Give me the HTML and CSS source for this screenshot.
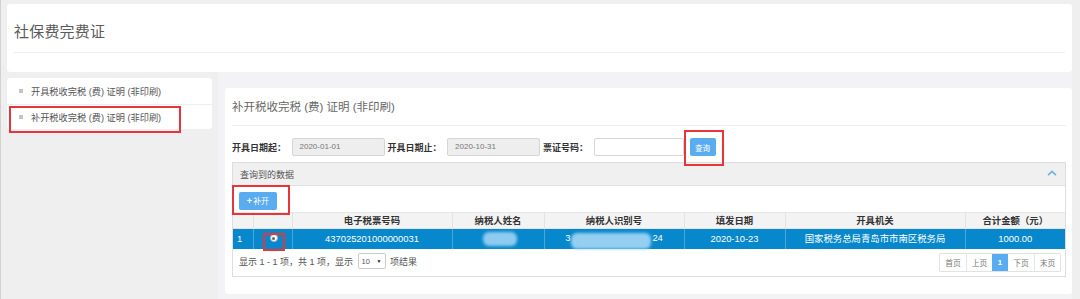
FILE: index.html
```html
<!DOCTYPE html>
<html lang="zh-CN">
<head>
<meta charset="utf-8">
<title>社保费完费证</title>
<link rel="stylesheet" href="styles.css">
</head>
<body>
<div class="page">
  <div class="top-panel">
    <div class="top-title">社保费完费证</div>
  </div>
  <div class="body-row">
    <div class="left-col">
      <ul class="menu">
        <li class="menu-item"><span class="bullet"></span>开具税收完税 (费) 证明 (非印刷)</li>
        <li class="menu-item"><span class="bullet"></span>补开税收完税 (费) 证明 (非印刷)<span class="mark mark-menu"></span></li>
      </ul>
    </div>
    <div class="right-col">
      <div class="main-panel">
        <div class="panel-title">补开税收完税 (费) 证明 (非印刷)</div>
        <div class="form-row">
          <label class="label">开具日期起：</label>
          <div class="input readonly">2020-01-01</div>
          <label class="label">开具日期止：</label>
          <div class="input readonly">2020-10-31</div>
          <label class="label">票证号码：</label>
          <div class="input plain"></div>
          <button class="btn btn-query">查询<span class="mark mark-query"></span></button>
        </div>
        <div class="data-panel">
          <div class="data-head">
            <span>查询到的数据</span>
            <svg class="chevron" width="10" height="6" viewBox="0 0 10 6"><polyline points="1,5.2 5,1.4 9,5.2" fill="none" stroke="#6fb2e2" stroke-width="1.6"/></svg>
          </div>
          <div class="toolbar">
            <button class="btn btn-add"><span class="plus">+</span>补开<span class="mark mark-add"></span></button>
          </div>
          <table class="grid">
            <colgroup>
              <col class="c1"><col class="c2"><col class="c3"><col class="c4"><col class="c5"><col class="c6"><col class="c7"><col class="c8">
            </colgroup>
            <thead>
              <tr>
                <th></th><th></th><th>电子税票号码</th><th>纳税人姓名</th><th>纳税人识别号</th><th>填发日期</th><th>开具机关</th><th>合计金额（元）</th>
              </tr>
            </thead>
            <tbody>
              <tr class="selected">
                <td class="idx">1</td>
                <td class="radio-cell"><span class="radio"><span class="dot"></span></span><span class="mark mark-radio"></span></td>
                <td>437025201000000031</td>
                <td><span class="mask mask-name"></span></td>
                <td>3<span class="mask mask-id"></span>24</td>
                <td>2020-10-23</td>
                <td>国家税务总局青岛市市南区税务局</td>
                <td>1000.00</td>
              </tr>
            </tbody>
          </table>
          <div class="grid-foot">
            <div class="info">显示 1 - 1 项，共 1 项，显示 <span class="select">10<span class="caret">▼</span></span> 项结果</div>
            <div class="pager">
              <span class="pg">首页</span><span class="pg">上页</span><span class="pg active">1</span><span class="pg">下页</span><span class="pg">末页</span>
            </div>
          </div>
        </div>
      </div>
    </div>
  </div>
</div>
</body>
</html>
```

FILE: styles.css
```css
* { box-sizing: border-box; }
html, body { margin: 0; padding: 0; }
body {
  background: #efefef;
  font-family: "Liberation Sans", "Noto Sans CJK SC", sans-serif;
  color: #555;
  width: 1080px;
  height: 299px;
  overflow: hidden;
}
.page {
  border-left: 1px solid #d2d2d2;
  padding: 4px 8px 0 6px;
  height: 299px;
}
.top-panel {
  background: #fff;
  border-radius: 3px;
  height: 68px;
  padding: 0 7px;
}
.top-title {
  height: 49px;
  border-bottom: 1px solid #eee;
  font-size: 15px;
  line-height: 15px;
  padding-top: 20px;
  color: #5a5a5a;
  letter-spacing: 0.2px;
}
.body-row {
  display: flex;
  gap: 6px;
}
.left-col {
  width: 205px;
  padding-top: 6px;
}
.menu {
  list-style: none;
  margin: 0;
  padding: 0;
  background: #fff;
  border-radius: 3px;
}
.menu-item {
  position: relative;
  height: 25.5px;
  display: flex;
  align-items: center;
  padding-left: 12px;
  font-size: 9.2px;
  color: #555;
}
.menu-item + .menu-item { border-top: 1px solid #eee; }
.bullet {
  width: 4px;
  height: 4px;
  background: #c4c4c4;
  margin-right: 8px;
}
.mark {
  position: absolute;
  border: 2px solid #e8353b;
  pointer-events: none;
}
.mark-menu { left: 2px; top: 1px; width: 172px; height: 27px; }
.right-col {
  flex: 1;
  background: #f3f3f5;
  padding: 16px 0 0 7px;
  height: 227px;
}
.main-panel {
  background: #fff;
  border-radius: 3px;
  padding: 0 6px 17px 7px;
}
.panel-title {
  height: 38px;
  border-bottom: 1px solid #eee;
  font-size: 11.5px;
  color: #666;
  padding-top: 12px;
  line-height: 14px;
}
.form-row {
  display: flex;
  align-items: center;
  margin-top: 12px;
  height: 18px;
}
.label {
  font-size: 9px;
  font-weight: bold;
  color: #333;
  margin-right: 5.5px;
  white-space: nowrap;
}
.input {
  height: 18px;
  border: 1px solid #d6d6d6;
  border-radius: 2px;
  font-size: 8px;
  color: #777;
  line-height: 16px;
  padding-left: 7px;
  margin-right: 3px;
}
.readonly { background: #eee; width: 93px; }
.plain { background: #fff; width: 90px; margin-right: 6px; }
.btn {
  position: relative;
  border: none;
  background: #5aacf0;
  color: #fff;
  border-radius: 2px;
  font-family: inherit;
  padding: 0;
  cursor: pointer;
}
.btn-query { width: 26px; height: 18px; font-size: 7.6px; }
.mark-query { left: -6px; top: -8px; width: 40px; height: 36px; }
.data-panel {
  margin-top: 6px;
  border: 1px solid #ddd;
}
.data-head {
  height: 23px;
  background: #f0f0f0;
  border-bottom: 1px solid #e0e0e0;
  display: flex;
  align-items: center;
  justify-content: space-between;
  padding: 0 8px 0 7px;
  font-size: 9px;
  color: #555;
}
.chevron { display: block; margin-top: -2px; }
.toolbar {
  height: 26px;
  padding: 4px 0 0 6px;
}
.btn-add { width: 38px; height: 18px; font-size: 8px; }
.plus { font-weight: bold; font-size: 9px; margin-right: 1px; }
.mark-add { left: -7px; top: -7px; width: 58px; height: 30px; }
.grid {
  width: 100%;
  border-collapse: collapse;
  table-layout: fixed;
  font-size: 9.4px;
}
.c1 { width: 20px; }
.c2 { width: 39px; }
.c3 { width: 160px; }
.c4 { width: 92px; }
.c5 { width: 140px; }
.c6 { width: 101px; }
.c7 { width: 180px; }
.grid th {
  height: 16px;
  background: #f3f3f3;
  color: #333;
  font-weight: bold;
  border: 1px solid #e2e2e2;
  border-top: 1px solid #e6e6e6;
  padding: 0;
  line-height: 14px;
}
.grid th:first-child { border-left: none; }
.grid th:last-child { border-right: none; }
.grid td {
  height: 20px;
  padding: 0;
  text-align: center;
  color: #fff;
  background: #0788cc;
  border-left: 1px solid #4aa6db;
  white-space: nowrap;
  line-height: 14px;
}
.grid td:first-child { border-left: none; }
.grid td.idx { text-align: left; padding-left: 4px; }
.radio-cell { position: relative; }
.radio {
  display: inline-block;
  width: 8px;
  height: 8px;
  border-radius: 50%;
  background: #fff;
  border: 1px solid #b5b5b5;
  position: relative;
  vertical-align: middle;
  margin-left: 2px;
  margin-top: -3px;
}
.dot {
  position: absolute;
  left: 1.5px;
  top: 1.5px;
  width: 3px;
  height: 3px;
  border-radius: 50%;
  background: #666;
}
.mark-radio { left: 9px; top: 4px; width: 22px; height: 18px; }
.mask {
  display: inline-block;
  vertical-align: middle;
  background: #8ecbf0;
  border-radius: 6px;
  filter: blur(1.5px);
}
.mask-name { width: 34px; height: 14px; margin-left: 4px; }
.mask-id { width: 80px; height: 16px; margin: 4px 1px 0 1px; background: #94cff2; }
.grid-foot {
  height: 27px;
  display: flex;
  align-items: flex-start;
  justify-content: space-between;
  padding: 4px 4px 0 6px;
}
.info { font-size: 9px; color: #555; display: flex; align-items: center; white-space: pre; height: 16px; }
.select {
  display: inline-flex;
  align-items: center;
  justify-content: space-between;
  width: 28px;
  height: 16px;
  border: 1px solid #ccc;
  border-radius: 2px;
  font-size: 7.5px;
  color: #555;
  padding: 0 3px 0 3px;
  margin: 0 2px;
}
.caret { font-size: 5px; color: #222; }
.pager {
  display: flex;
  border: 1px solid #e2e2e2;
  border-radius: 2px;
  height: 19px;
}
.pg {
  width: 26px;
  display: flex;
  align-items: center;
  justify-content: center;
  font-size: 7.8px;
  color: #777;
  border-left: 1px solid #e6e6e6;
}
.pg:first-child { border-left: none; }
.pg.active { width: 16px; background: #5aacf0; color: #fff; border-left: none; font-weight: bold; }
.pg.active + .pg { border-left: none; }
```
